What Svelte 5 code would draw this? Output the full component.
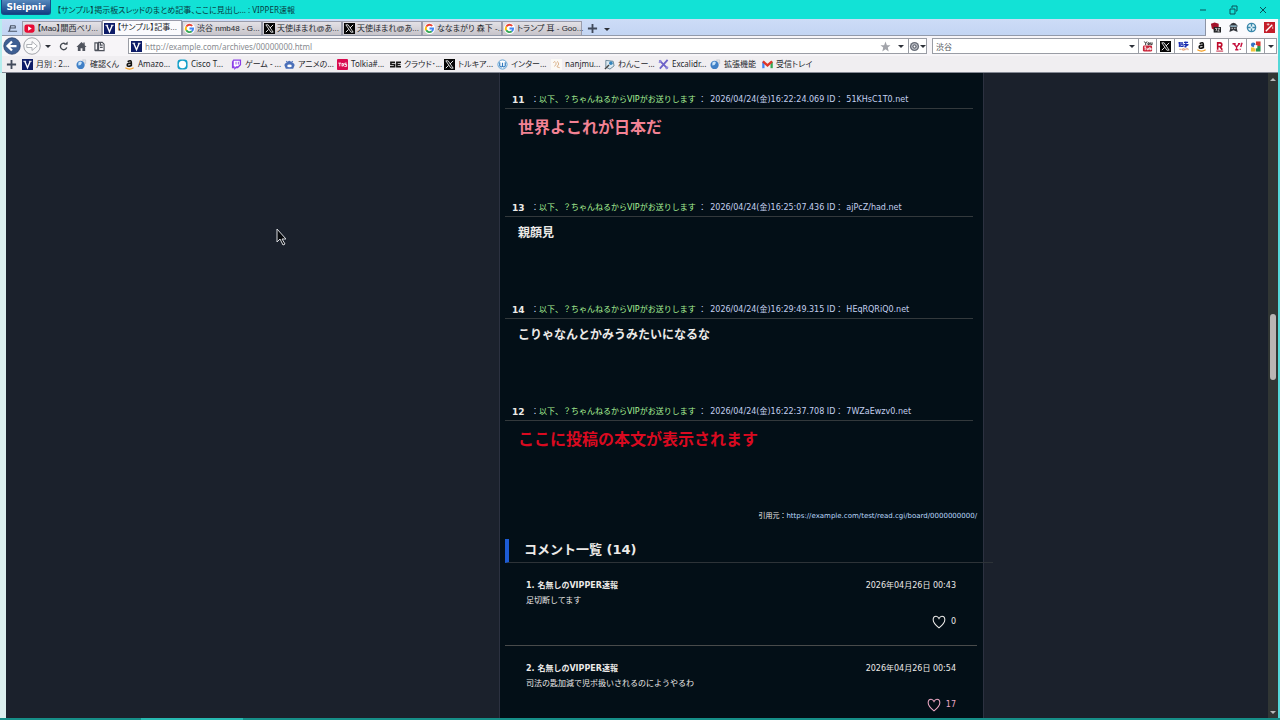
<script>
  const tabs = [
    { icon: 'yt', label: '【Mao】關西ベリ...' },
    { icon: 'v', label: '【サンプル】記事...', active: true },
    { icon: 'g', label: '渋谷 nmb48 - G...' },
    { icon: 'x', label: '天使ほまれ@あ...' },
    { icon: 'x', label: '天使ほまれ@あ...' },
    { icon: 'g', label: 'ななまがり 森下 -...' },
    { icon: 'g', label: 'トランプ 耳 - Goo...' }
  ];
  const bookmarks = [
    { icon: 'v', label: '月別 : 2...', w: 54 },
    { icon: 'globe', label: '確認くん', w: 48 },
    { icon: 'a', label: 'Amazo...', w: 53 },
    { icon: 'ring', label: 'Cisco T...', w: 54 },
    { icon: 'twitch', label: 'ゲーム - ...', w: 53 },
    { icon: 'anime', label: 'アニメの...', w: 53 },
    { icon: 'tbs', label: 'Tolkia#...', w: 53 },
    { icon: 'se', label: 'クラウド･...', w: 54 },
    { icon: 'x', label: 'トルキア...', w: 53 },
    { icon: 'w', label: 'インター...', w: 54 },
    { icon: 'nan', label: 'nanjmu...', w: 53 },
    { icon: 'dog', label: 'わんこー...', w: 54 },
    { icon: 'ex', label: 'Excalidr...', w: 52 },
    { icon: 'globe', label: '拡張機能', w: 52 },
    { icon: 'gmail', label: '受信トレイ', w: 54 }
  ];
  const engines = [
    ['youtube', 'YouTube'], ['x', 'X'], ['kakaku', '価格.com'], ['a', 'Amazon'],
    ['r', 'Rakuten'], ['y', 'Yahoo'], ['oldg', 'Google']
  ];
  const posts = [
    { no: 11, time: '2026/04/24(金)16:22:24.069', id: '51KHsC1T0.net', text: '世界よこれが日本だ', kind: 'big pink' },
    { no: 13, time: '2026/04/24(金)16:25:07.436', id: 'ajPcZ/had.net', text: '親顔見', kind: '' },
    { no: 14, time: '2026/04/24(金)16:29:49.315', id: 'HEqRQRiQ0.net', text: 'こりゃなんとかみうみたいになるな', kind: '' },
    { no: 12, time: '2026/04/24(金)16:22:37.708', id: '7WZaEwzv0.net', text: 'ここに投稿の本文が表示されます', kind: 'big red' }
  ];
  const comments = [
    { no: 1, time: '2026年04月26日 00:43', text: '足切断してます', likes: 0 },
    { no: 2, time: '2026年04月26日 00:54', text: '司法の匙加減で児ポ扱いされるのにようやるわ', likes: 17, hot: true }
  ];
</script>

{#snippet icon(name)}
  <svg class="icon" viewBox="0 0 24 24" aria-hidden="true">
    {#if name === 'yt'}
      <rect x="1" y="3" width="22" height="18" rx="5" fill="#e80b35" /><path d="M9 7l8 5-8 5z" fill="#fff" />
    {:else if name === 'v'}
      <rect width="24" height="24" fill="#0d1c68" /><path d="M6 5l6 14 6-14" fill="none" stroke="#fff" stroke-width="3" /><path d="M3 5h6M15 5h6" stroke="#fff" stroke-width="2" />
    {:else if name === 'g'}
      <circle cx="12" cy="12" r="12" fill="#fff" />
      <g fill="none" stroke-width="4"><path d="M18 6.500A8 8 0 0 0 5 8" stroke="#ea4335" /><path d="M5 8a8 8 0 0 0 0 8" stroke="#fbbc05" /><path d="M5 16a8 8 0 0 0 12 2" stroke="#34a853" /><path d="M17 18a8 8 0 0 0 3-6h-8" stroke="#4285f4" /></g>
    {:else if name === 'x'}
      <rect width="24" height="24" fill="#050505" /><path d="M4 4h5l11 16h-5z" fill="none" stroke="#fff" stroke-width="1.800" /><path d="M20 4l-7 7M10 14l-6 6" stroke="#fff" stroke-width="2" />
    {:else if name === 'globe'}
      <circle cx="10" cy="13" r="9" fill="#3f7fc6" /><path d="M5 8q5-5 8 0l-3 5-5 1z" fill="#c9e4fa" /><path d="M14 2h7v8z" fill="#e7eaf0" stroke="#a9b0ba" />
    {:else if name === 'a'}
      <path d="M8 6q8-5 8 2v8M16 9q-9 0-9 4 0 5 9 1" fill="none" stroke="#111" stroke-width="3.500" /><path d="M3 19q9 6 18 0" fill="none" stroke="#f39a1b" stroke-width="2.500" />
    {:else if name === 'ring'}
      <rect x="1" y="1" width="22" height="22" rx="7" fill="#129fc8" /><circle cx="12" cy="12" r="8" fill="#fff" />
    {:else if name === 'twitch'}
      <path d="M5 1L2 6v14h5v4l4-4h4l7-7V1z" fill="#8c3ee8" /><path d="M6 4h13v8l-4 4h-4l-3 3v-3H6z" fill="#fff" /><path d="M11 6v6M16 6v6" stroke="#8c3ee8" stroke-width="2" />
    {:else if name === 'anime'}
      <path d="M1 14q0-6 6-6 4-8 10 0 6 0 6 6l-3 7H4z" fill="#4a6fb9" /><ellipse cx="12" cy="15" rx="5" ry="3" fill="#fff" /><path d="M5 5l3 3M19 5l-3 3" stroke="#4a6fb9" stroke-width="3" />
    {:else if name === 'tbs'}
      <rect width="24" height="24" rx="2" fill="#d90b50" /><path d="M3 9h6M6 9v7M11 9v7M11 10h3v5h-3M21 9h-4v3h4v4h-5" fill="none" stroke="#fff" stroke-width="2" />
    {:else if name === 'se'}
      <path d="M11 7H2v5h8v5H0M24 7h-9v10h9M15 12h8" fill="none" stroke="#151515" stroke-width="3.500" />
    {:else if name === 'w'}
      <circle cx="12" cy="12" r="10" fill="#fff" stroke="#5299cf" stroke-width="2" /><path d="M6 7v8q3 5 6 0V8v7q3 5 6 0V7" fill="none" stroke="#2f79bd" stroke-width="2.500" />
    {:else if name === 'nan'}
      <rect width="24" height="24" fill="#fbf9f6" /><path d="M5 8q4-5 6 0t-4 8M14 5l3 6-4 6 6 2" fill="none" stroke="#d9ad82" stroke-width="2" />
    {:else if name === 'dog'}
      <path d="M4 3l16 2 2 10-9 7-9-4z" fill="#dceaf2" stroke="#648294" stroke-width="2" /><circle cx="15" cy="9" r="4" fill="#3686bd" /><path d="M2 22l9-9" stroke="#444" stroke-width="3" />
    {:else if name === 'ex'}
      <path d="M3 3l18 18M21 2L4 21" stroke="#6c62c8" stroke-width="4" /><path d="M2 8l5-5M17 22l5-5" stroke="#918adc" stroke-width="3" />
    {:else if name === 'gmail'}
      <path d="M3 20V6" stroke="#4285f4" stroke-width="5" /><path d="M21 20V6" stroke="#34a853" stroke-width="5" /><path d="M2 5l10 9 10-9" fill="none" stroke="#df3528" stroke-width="5" />
    {:else if name === 'youtube'}
      <path d="M5 1l3 4 3-4M8 5v4M13 4h3v4h-3zM19 3v5h3V3" fill="none" stroke="#222" stroke-width="2" /><rect x="2" y="10" width="20" height="13" rx="3" fill="#c92338" /><path d="M5 13h4M7 13v7M11 15v4h3v-4M17 13v6h3v-3h-3" fill="none" stroke="#fff" stroke-width="2" />
    {:else if name === 'kakaku'}
      <path d="M1 4h10M3 2v11M6 7h5v5H6zM13 3h9M17 1v13M13 8h10M14 13l8-5" fill="none" stroke="#1b2db0" stroke-width="2.500" /><path d="M3 18h5M10 17h4v3h-4zM17 20v-3h5v3" fill="none" stroke="#e49a70" stroke-width="2" />
    {:else if name === 'r'}
      <path d="M8 19V4h5q4 0 4 4t-4 4H8m5 0l5 7" fill="none" stroke="#bf0a2b" stroke-width="3.500" /><path d="M5 22h15" stroke="#bf0a2b" stroke-width="2" />
    {:else if name === 'y'}
      <path d="M1 6h7M4 6l6 7 6-7M10 13v6M7 19h7M13 6h5" fill="none" stroke="#c6123f" stroke-width="3" /><path d="M22 4l-3 9M18 17v2" stroke="#c6123f" stroke-width="3" />
    {:else if name === 'oldg'}
      <rect x="13" y="1" width="10" height="10" fill="#d5382e" /><rect x="13" y="11" width="10" height="12" fill="#29944d" /><rect x="2" y="14" width="10" height="9" fill="#f0c63c" /><circle cx="7" cy="8" r="5" fill="#3472c4" /><path d="M9 9h7v7H9z" fill="#fff" />
    {:else if name === 'back'}
      <circle cx="12" cy="12" r="11" fill="#3e5f93" stroke="#263d68" stroke-width="1" /><path d="M18 12H7m5-6l-6 6 6 6" fill="none" stroke="#fff" stroke-width="3" />
    {:else if name === 'forward'}
      <circle cx="12" cy="12" r="11" fill="#f8f8f9" stroke="#858990" stroke-width="1" /><path d="M5 10h7V6l7 6-7 6v-4H5z" fill="#fff" stroke="#9699a0" />
    {:else if name === 'reload'}
      <path d="M19 14a7 7 0 1 1-3-8" fill="none" stroke="#454a52" stroke-width="3" /><path d="M13 8h8V1z" fill="#454a52" />
    {:else if name === 'home'}
      <path d="M12 2L1 13h3v9h6v-6h4v6h6v-9h3l-4-4V3h-3v3z" fill="#50545e" />
    {:else if name === 'page'}
      <path d="M2 4h6v16H2zM10 3h8l4 4v14H10zM14 3v6h5M13 14h6M2 21h20" fill="none" stroke="#4e525b" stroke-width="2.500" />
    {:else if name === 'plus'}
      <path d="M12 2v20M2 12h20" stroke="#414a5b" stroke-width="4" />
    {:else if name === 'star'}
      <path d="M12 1l3 8h8l-6 5 2 9-7-5-7 5 2-9-6-5h8z" fill="#a2a4aa" />
    {:else if name === 'gear'}
      <circle cx="12" cy="12" r="10" fill="#6a6f7a" /><circle cx="12" cy="12" r="6" fill="none" stroke="#d9dbe0" stroke-width="2" /><circle cx="12" cy="12" r="2" fill="#fff" />
    {:else if name === 'group'}
      <path d="M7 6h11M5 11h14M2 18h20M8 6l-3 12M18 6v6" fill="none" stroke="#4a5466" stroke-width="2.500" />
    {:else if name === 'shield'}
      <path d="M2 4l8-3 9 3v8l-8 6-7-4z" fill="#a3122b" /><rect x="8" y="11" width="16" height="12" fill="#202124" /><path d="M11 14h4l-2 6M17 14h4l-4 6h4" fill="none" stroke="#fff" stroke-width="1.500" />
    {:else if name === 'agent'}
      <path d="M3 8q9-13 18 0l-2 5H5z" fill="#33363c" /><path d="M5 9h14" stroke="#9fc4d8" stroke-width="3" /><path d="M5 13h14l2 9-9-4-9 4z" fill="#33363c" /><path d="M8 14h2M14 14h2" stroke="#fff" stroke-width="3" />
    {:else if name === 'target'}
      <circle cx="12" cy="12" r="9" fill="#e8f6fc" stroke="#3987aa" stroke-width="3" /><path d="M12 4v6M12 14v6M4 12h6M14 12h6" stroke="#3987aa" stroke-width="3" />
    {:else if name === 'wand'}
      <rect width="24" height="24" fill="#c31c29" /><path d="M4 20L18 6" stroke="#fff" stroke-width="3" /><path d="M9 3v5M6 5h6M19 10v5" stroke="#fff" stroke-width="1.500" />
    {:else if name === 'heart'}
      <path d="M12 22Q2 14 2 8q0-6 5-6 3 0 5 4 2-4 5-4 5 0 5 6 0 6-10 14z" fill="none" stroke="currentColor" stroke-width="1.800" />
    {/if}
  </svg>
{/snippet}

<div class="window">
  <header class="title">
    <button class="brand">Sleipnir</button>
    <span class="caption">【サンプル】掲示板スレッドのまとめ記事、ここに見出し... : VIPPER速報</span>
    <div class="controls">
      <button aria-label="Minimize"><svg viewBox="0 0 10 10"><path d="M2 5h6" /></svg></button>
      <button aria-label="Restore"><svg viewBox="0 0 10 10"><path d="M2 4h5v5H2zM4 3V1h5v5H8" /></svg></button>
      <button aria-label="Close"><svg viewBox="0 0 10 10"><path d="M2 2l6 6M8 2L2 8" /></svg></button>
    </div>
  </header>

  <div class="frame">
    <div class="tabrow">
      <div class="strip">
        <button class="tool group" aria-label="Tab groups">{@render icon('group')}</button>
        {#each tabs as tab}
          <button class="tab" class:active={tab.active}>{@render icon(tab.icon)}<span>{tab.label}</span></button>
        {/each}
        <button class="tool new" aria-label="New tab">{@render icon('plus')}</button>
        <button class="arrow" aria-label="Tab list"></button>
      </div>
      <div class="extensions">
        {#each ['shield', 'agent', 'target', 'wand'] as name}
          <button aria-label={name}>{@render icon(name)}</button>
        {/each}
      </div>
    </div>

    <div class="address">
      <nav class="nav" aria-label="Navigation">
        <button class="round" aria-label="Back">{@render icon('back')}</button>
        <button class="round" aria-label="Forward">{@render icon('forward')}</button>
        <button class="arrow" aria-label="History"></button>
        <button class="tool" aria-label="Reload">{@render icon('reload')}</button>
        <button class="tool" aria-label="Home">{@render icon('home')}</button>
        <button class="tool" aria-label="Pages">{@render icon('page')}</button>
      </nav>
      <div class="url">
        {@render icon('v')}
        <input aria-label="Address" value="http://example.com/archives/00000000.html" />
        <button class="tool" aria-label="Favorite">{@render icon('star')}</button>
        <button class="arrow" aria-label="Address list"></button>
        <button class="gear" aria-label="Engine">{@render icon('gear')}<i class="arrow"></i></button>
      </div>
      <div class="search">
        <input aria-label="Search" value="渋谷" />
        <button class="arrow" aria-label="Search list"></button>
        {#each engines as [name, label]}
          <button class="engine" aria-label={label}>{@render icon(name)}</button>
        {/each}
        <button class="more" aria-label="More"><i class="arrow"></i></button>
      </div>
    </div>

    <nav class="bookmarks" aria-label="Bookmarks">
      <button class="tool" aria-label="Add bookmark">{@render icon('plus')}</button>
      {#each bookmarks as item}
        <button class="bookmark" style:width="{item.w}px">{@render icon(item.icon)}<span>{item.label}</span></button>
      {/each}
    </nav>
  </div>

  <div class="view">
    <main>
      <article>
        {#each posts as post}
          <section class="post">
            <h3><b>{post.no}</b><span>：<em>以下、？ちゃんねるからVIPがお送りします</em> ：</span><time>{post.time} ID：</time><span>{post.id}</span></h3>
            <p class={post.kind}>{post.text}</p>
          </section>
        {/each}
        <p class="source">引用元：<a href="#top">https://example.com/test/read.cgi/board/0000000000/</a></p>
        <h2>コメント一覧 (14)</h2>
        {#each comments as comment}
          <section class="comment">
            <header><b>{comment.no}. 名無しのVIPPER速報</b><time>{comment.time}</time></header>
            <p>{comment.text}</p>
            <button class="like" class:hot={comment.hot} aria-label="Like">{@render icon('heart')}<span>{comment.likes}</span></button>
          </section>
        {/each}
      </article>
    </main>
    <div class="scroll"><i class="arrow up"></i><div class="thumb"></div><i class="arrow"></i></div>
  </div>
  <footer></footer>
  <svg class="cursor" viewBox="0 0 10 18" aria-hidden="true"><path d="M1 1v13l3-3 3 6 2-1-3-5h4z" fill="#07090c" stroke="#d8dade" /></svg>
</div>

<style>
  :global(body) { margin: 0; background: #1b212c; }
  * { box-sizing: border-box; }
  button, input { margin: 0; padding: 0; border: 0; background: none; font: inherit; color: inherit; }
  button { display: flex; align-items: center; justify-content: center; flex: none; }
  h2, h3, p { margin: 0; }
  .icon { width: 11px; height: 11px; flex: none; display: block; }
  .window { position: relative; display: flex; flex-direction: column; height: 100vh; overflow: hidden; background: #b5eeee; font: 8px/12px "Noto Sans", "Noto Sans CJK JP", sans-serif; color: #24272d; }
  .title { display: flex; align-items: center; height: 19px; flex: none; background: #12e2d6; padding-left: 1px; }
  .brand { width: 50px; height: 15px; align-self: flex-start; border: 1px solid #174d88; border-top: 0; border-radius: 0 0 3px 3px; background: linear-gradient(#5688bd, #123f82); color: #fff; font: bold 9px/12px "DejaVu Sans", sans-serif; }
  .caption { margin-left: 6px; color: #073c43; font-feature-settings: "palt"; white-space: nowrap; }
  .controls { display: flex; margin-left: auto; padding-right: 2px; }
  .controls button { width: 30px; height: 18px; }
  .controls svg { width: 10px; height: 10px; fill: none; stroke: #085158; }
  .frame { flex: none; margin-left: 2px; border-right: 2px solid #54d8d8; background: #f0eef1; }
  .tabrow { display: flex; height: 17px; background: #fafafd; }
  .strip { display: flex; align-items: flex-end; flex: 1; min-width: 0; background: linear-gradient(#cddcf7, #c3d5f3); border-right: 1px solid #8b93a5; border-bottom: 1px solid #929aaa; }
  .tool { width: 18px; height: 14px; }
  .group { width: 20px; }
  .new { margin-left: 1px; }
  .tab { width: 80px; height: 14px; gap: 2px; padding: 0 1px; justify-content: flex-start; border: 1px solid #9a9cab; border-bottom: 0; background: linear-gradient(#e3e1e6, #c7c4ca); font-family: "Liberation Sans", "Noto Sans CJK JP", sans-serif; }
  .tab.active { background: #fafafd; height: 15px; }
  .tab span, .bookmark span { white-space: nowrap; font-feature-settings: "palt"; }
  .extensions { display: flex; align-items: center; width: 72px; flex: none; }
  .extensions button { width: 18px; }
  .address { display: flex; align-items: center; height: 20px; padding-right: 1px; background: #f7f5f8; }
  .nav { display: flex; align-items: center; width: 126px; flex: none; }
  .round { width: 20px; height: 18px; }
  .round .icon { width: 18px; height: 18px; }
  .arrow { width: 12px; height: 12px; display: flex; align-items: center; justify-content: center; flex: none; }
  .arrow::before { content: ""; border: 3px solid transparent; border-top-color: #2c3038; border-bottom: 0; }
  .arrow.up::before { transform: rotate(180deg); }
  .url, .search { display: flex; align-items: center; height: 16px; border: 1px solid #9a9da5; background: #fff; min-width: 0; }
  .url { flex: 1; padding-left: 2px; gap: 1px; }
  input { flex: 1; min-width: 0; height: 14px; outline: 0; padding-left: 2px; color: #888b90; }
  .gear { width: 18px; height: 14px; border-left: 1px solid #9a9da5; }
  .gear .arrow { width: 6px; }
  .search { width: 345px; margin-left: 5px; flex: none; }
  .search input { padding-left: 3px; color: #505359; }
  .engine { width: 18px; height: 14px; border-left: 1px solid #9a9da5; }
  .more { width: 12px; height: 14px; border-left: 1px solid #9a9da5; }
  .more .arrow { width: 8px; }
  .bookmarks { display: flex; align-items: center; height: 17px; border-bottom: 1px solid #858994; }
  .bookmarks > .tool { margin-right: 2px; }
  .bookmark { justify-content: flex-start; gap: 3px; }
  .view { display: flex; flex: 1; min-height: 0; border-left: 6px solid #dcefee; border-right: 2px solid #54d8d8; }
  main { display: grid; grid-template-columns: 493fr 485px 284fr; flex: 1; min-width: 0; overflow: hidden; background: #1b212c; }
  article { grid-column: 2; padding: 20px 6px 0 5px; border: solid #2c3140; border-width: 0 1px; background: #030f17; color: #eceae8; font: 8px/14px "DejaVu Sans", "Noto Sans CJK JP", sans-serif; }
  .post { margin-right: 4px; }
  h3 { display: flex; height: 16px; padding-left: 7px; border-bottom: 1px solid #33393c; font: 8px/14px "DejaVu Sans", "Noto Sans CJK JP", sans-serif; white-space: pre; color: #c3d0ef; }
  h3 b { width: 19px; font-size: 9px; color: #eceae8; }
  h3 em { font-style: normal; color: #aaf396; }
  h3 time { margin: 0 3px 0 4px; }
  .post p { padding: 9px 0 63px 13px; font-size: 12px; line-height: 14px; font-weight: bold; }
  .post .big { font-size: 16px; line-height: 20px; }
  .post .pink { color: #f28294; }
  .post .red { color: #d90a20; }
  .source { margin-top: -3px; font-size: 7px; line-height: 12px; text-align: right; }
  .source a { color: #b9d8fb; text-decoration: none; }
  h2 { width: 488px; height: 24px; margin-top: 17px; padding-left: 15px; border-left: 4px solid #1c5bd4; border-bottom: 1px solid #2d3338; font-size: 13px; line-height: 22px; }
  .comment { display: flex; flex-direction: column; height: 83px; padding: 16px 21px 0; border-bottom: 1px solid #494b4b; }
  .comment header { display: flex; justify-content: space-between; }
  .comment p { line-height: 16px; }
  .like { align-self: flex-end; gap: 5px; margin-top: 6px; }
  .like .icon { width: 14px; height: 14px; }
  .hot { color: #eba7c3; }
  .scroll { display: flex; flex-direction: column; align-items: center; width: 10px; flex: none; background: #313634; }
  .scroll .arrow { width: 10px; }
  .scroll .arrow::before { border-top-color: #b8bab9; }
  .thumb { width: 6px; height: 66px; margin: 229px 0 auto; border-radius: 3px; background: #b9b5b4; flex: none; }
  footer { height: 2px; flex: none; background: linear-gradient(90deg, #168e88 0 11%, #27b9b1 11% 19%, #168e88 19%); }
  .cursor { position: absolute; left: 276px; top: 228px; width: 10px; height: 18px; }
</style>
